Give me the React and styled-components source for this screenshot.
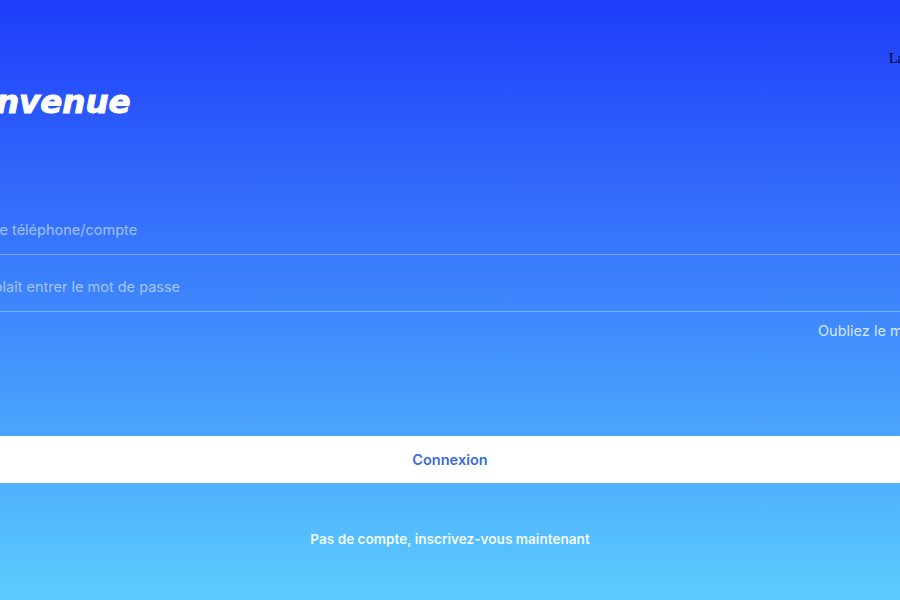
import styled, { createGlobalStyle } from "styled-components";

const GlobalStyle = createGlobalStyle`
  html, body {
    margin: 0;
    padding: 0;
    height: 100%;
    overflow: hidden;
  }
  #root {
    height: 100%;
  }
`;

const Page = styled.div`
  width: 900px;
  height: 600px;
  overflow: hidden;
  position: relative;
  font-family: Inter, "Noto Sans", sans-serif;
  background: linear-gradient(180deg, #1e3cfa 0%, #5ccdfe 100%);
`;

const Language = styled.div`
  position: absolute;
  top: 50px;
  left: 889px;
  font-family: "Liberation Serif", serif;
  font-size: 14px;
  line-height: 18px;
  color: #000;
  white-space: nowrap;
`;

const Content = styled.div`
  width: 1036px;
  margin-left: -68px;
  padding-top: 84px;
  display: flex;
  flex-direction: column;
`;

const Title = styled.h1`
  margin: 0 0 0 6px;
  height: 114px;
  font-family: "DejaVu Sans", sans-serif;
  font-size: 32.5px;
  line-height: 37px;
  font-style: italic;
  font-weight: 700;
  -webkit-text-stroke: 1px #fff;
  color: #fff;
  white-space: nowrap;
`;

const Field = styled.div`
  height: 50px;
  padding-top: 6px;
  border-bottom: 1px solid rgba(255, 255, 255, 0.35);
  display: flex;
  align-items: center;
  font-size: 14.5px;
  color: rgba(255, 255, 255, 0.55);
  white-space: nowrap;
`;

const Forgot = styled.div`
  margin-top: 10px;
  margin-left: 886px;
  font-size: 14.5px;
  line-height: 18px;
  color: rgba(255, 255, 255, 0.8);
  white-space: nowrap;
`;

const Submit = styled.button`
  margin-top: 96px;
  height: 47px;
  border: 0;
  background: #fff;
  color: #3a6cdb;
  font-family: inherit;
  font-size: 14.5px;
  font-weight: 600;
`;

const Signup = styled.div`
  margin-top: 47px;
  text-align: center;
  font-size: 13.6px;
  line-height: 18px;
  font-weight: 600;
  color: rgba(255, 255, 255, 0.95);
`;

export default function App() {
  return (
    <Page>
      <GlobalStyle />
      <Language>Langue</Language>
      <Content>
        <Title>Bienvenue</Title>
        <Field>Numéro de téléphone/compte</Field>
        <Field>S'il vous plaît entrer le mot de passe</Field>
        <Forgot>Oubliez le mot de passe ?</Forgot>
        <Submit>Connexion</Submit>
        <Signup>Pas de compte, inscrivez-vous maintenant</Signup>
      </Content>
    </Page>
  );
}
